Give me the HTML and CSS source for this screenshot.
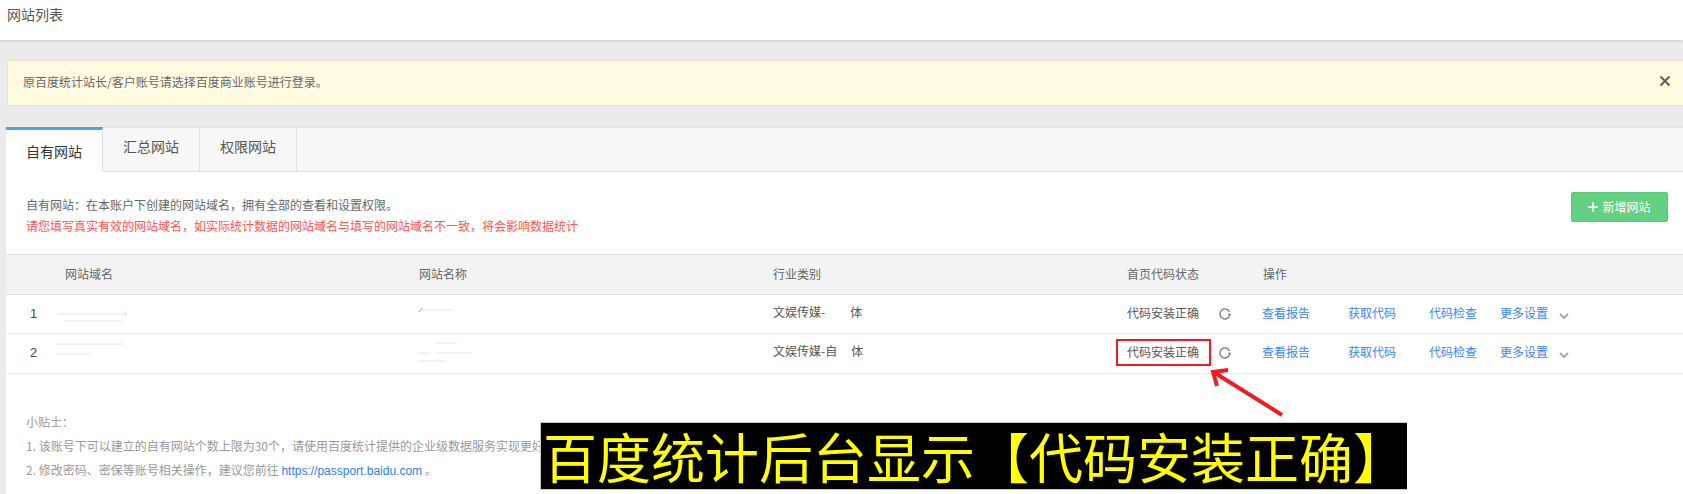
FILE: index.html
```html
<!DOCTYPE html>
<html lang="zh-CN">
<head>
<meta charset="utf-8">
<title>网站列表</title>
<link rel="stylesheet" href="styles.css">
</head>
<body>
<header class="topbar">网站列表</header>
<div class="alert">
  <span>原百度统计站长/客户账号请选择百度商业账号进行登录。</span>
  <svg class="alert-close" viewBox="0 0 12 12" width="12" height="12"><path d="M1.5 1.5l9 9M10.5 1.5l-9 9"/></svg>
</div>
<main class="panel">
  <nav class="tabs">
    <a class="tab tab-active">自有网站</a>
    <a class="tab">汇总网站</a>
    <a class="tab">权限网站</a>
  </nav>
  <section class="intro">
    <div class="intro-text">
      <p>自有网站：在本账户下创建的网站域名，拥有全部的查看和设置权限。</p>
      <p class="warn">请您填写真实有效的网站域名，如实际统计数据的网站域名与填写的网站域名不一致，将会影响数据统计</p>
    </div>
    <button class="add-btn"><svg class="plus" viewBox="0 0 10 10" width="10" height="10"><path d="M5 0v10M0 5h10"/></svg>新增网站</button>
  </section>
  <div class="row row-head">
    <div class="num"></div>
    <div>网站域名</div>
    <div>网站名称</div>
    <div>行业类别</div>
    <div>首页代码状态</div>
    <div>操作</div>
  </div>
  <div class="row row-one">
    <div class="num">1</div>
    <div><svg class="smudge" width="100" height="39"><path d="M-7 19H61M0 26H57"/><path class="tick" d="M60.500 16v6"/></svg></div>
    <div><svg class="smudge" width="100" height="39"><path d="M2 15H34"/><path class="dark" d="M0 17l3-4"/></svg></div>
    <div class="industry">文娱传媒-<span class="gap"></span>体</div>
    <div class="status">代码安装正确<svg class="refresh" viewBox="0 0 12 12" width="12" height="12"><path d="M10.800 7.200a5 5 0 1 1-.3-3.300"/><path class="refresh-head" d="M8.800 5.800h3.200l-1.500 2.200z"/></svg></div>
    <div class="ops"><a>查看报告</a><a>获取代码</a><a>代码检查</a><a>更多设置</a><svg class="chev" viewBox="0 0 10 6" width="10" height="6"><path d="M1 1l4 4 4-4"/></svg></div>
  </div>
  <div class="row row-two">
    <div class="num">2</div>
    <div><svg class="smudge" width="100" height="39"><path d="M-9 10H59M-8 20H26"/></svg></div>
    <div><svg class="smudge" width="100" height="39"><path d="M16 9H38M0 19H11M18 19H52M0 27H26"/></svg></div>
    <div class="industry">文娱传媒-自<span class="gap gap-short"></span>体</div>
    <div class="status">代码安装正确<svg class="refresh" viewBox="0 0 12 12" width="12" height="12"><path d="M10.800 7.200a5 5 0 1 1-.3-3.300"/><path class="refresh-head" d="M8.800 5.800h3.200l-1.500 2.200z"/></svg></div>
    <div class="ops"><a>查看报告</a><a>获取代码</a><a>代码检查</a><a>更多设置</a><svg class="chev" viewBox="0 0 10 6" width="10" height="6"><path d="M1 1l4 4 4-4"/></svg></div>
  </div>
  <section class="tips">
    <p>小贴士：</p>
    <p>1. 该账号下可以建立的自有网站个数上限为30个，请使用百度统计提供的企业级数据服务实现更好</p>
    <p>2. 修改密码、密保等账号相关操作，建议您前往 <a class="tip-link">https://passport.baidu.com</a> 。</p>
  </section>
</main>
<div class="mark-box"></div>
<svg class="mark-arrow" viewBox="0 0 80 54" width="80" height="54"><path class="shaft" d="M75 49L8 7"/><path class="head" d="M21 4L6 6 10 20"/></svg>
<div class="banner">百度统计后台显示【代码安装正确】</div>
</body>
</html>
```
FILE: styles.css
```css
* { box-sizing: border-box; }
html, body { margin: 0; padding: 0; height: 494px; overflow: hidden; }
body {
  position: relative;
  background: #ebebeb;
  font-family: "Noto Sans CJK SC", "Liberation Sans", sans-serif;
  font-size: 12px;
  color: #555;
}
p { margin: 0; }

.topbar {
  height: 40px;
  padding: 4px 7px 0;
  background: #fff;
  font-size: 14px;
  line-height: 20px;
  color: #555;
  box-shadow: 0 1px 3px rgba(0, 0, 0, .14);
}

.alert {
  display: flex;
  align-items: center;
  justify-content: space-between;
  height: 46px;
  margin: 20px 0 21px 7px;
  padding: 0 12px 0 15px;
  background: #fffbe1;
  border: 1px solid #ebe5c8;
  border-right: 0;
  border-radius: 2px 0 0 2px;
  color: #666;
}
.alert > span { padding-bottom: 3px; }
.alert-close { fill: none; stroke: #5f5f5f; stroke-width: 2; margin-top: -4px; }

.panel {
  height: 367px;
  margin-left: 6px;
  background: #fff;
}

.tabs {
  display: flex;
  height: 45px;
  background: #f7f7f7;
  border-top: 1px solid #e4e4e4;
  border-bottom: 1px solid #e1e1e1;
}
.tab {
  width: 97px;
  height: 44px;
  padding-top: 8px;
  font-size: 14px;
  line-height: 20px;
  text-align: center;
  color: #555;
  border-right: 1px solid #e1e1e1;
}
.tab-active {
  height: 45px;
  margin-top: -1px;
  padding-top: 11px;
  background: #fff;
  color: #333;
  border-top: 3px solid #4aa3f5;
}

.intro {
  display: flex;
  justify-content: space-between;
  align-items: flex-start;
  height: 82px;
  padding: 20px 15px 0 20px;
}
.intro-text { padding-top: 2px; line-height: 21px; color: #666; }
.warn { color: #f55; }
.add-btn {
  display: flex;
  align-items: center;
  justify-content: center;
  gap: 4px;
  width: 97px;
  height: 30px;
  padding: 0 0 2px;
  background: #62d282;
  border: 1px solid #53cb75;
  border-radius: 2px;
  color: #fff;
  font: inherit;
}
.plus { stroke: #fff; stroke-width: 1.600; fill: none; margin-top: 2px; }

.row {
  display: grid;
  grid-template-columns: 59px 354px 354px 354px 136px 1fr;
  align-items: center;
  height: 39px;
  color: #555;
  border-bottom: 1px solid #ececec;
}
.row-head {
  height: 41px;
  padding-bottom: 3px;
  background: #f3f3f3;
  border-top: 1px solid #e1e1e1;
  border-bottom: 1px solid #e1e1e1;
  color: #666;
}
.row-two { height: 40px; }
.num { padding: 0 0 2px 24px; font-family: "Liberation Sans", sans-serif; font-size: 13px; color: #445; }

.smudge { display: block; overflow: visible; fill: none; stroke: #e6e6e6; stroke-width: 1; }
.smudge .tick { stroke: #b8f2f5; stroke-width: 1; }
.smudge .dark { stroke: #999; }

.industry { display: flex; align-items: center; height: 100%; padding-bottom: 6px; color: #555; }
.gap { display: inline-block; width: 25px; }
.gap-short { width: 14px; }

.status { display: flex; align-items: center; height: 100%; padding-bottom: 4px; color: #555; }
.refresh { margin-left: 20px; margin-top: 3px; fill: none; stroke: #777; stroke-width: 1.300; }
.refresh .refresh-head { fill: #667; stroke: none; }

.ops { display: flex; align-items: center; height: 100%; padding-bottom: 4px; margin-left: -1px; color: #3a85f0; }
.ops a:nth-child(1) { margin-right: 38px; }
.ops a:nth-child(2) { margin-right: 33px; }
.ops a:nth-child(3) { margin-right: 23px; }
.chev { margin-left: 11px; margin-top: 6px; fill: none; stroke: #aaa; stroke-width: 2; }

.tips {
  padding: 36px 0 0 20px;
  line-height: 24px;
  color: #999;
  white-space: nowrap;
}
.tip-link { color: #2f80ed; font-family: "Liberation Sans", sans-serif; }

/* Annotations drawn over the screenshot */
.mark-box {
  position: absolute;
  left: 1116px;
  top: 339px;
  width: 95px;
  height: 27px;
  border: 2px solid #ee1c25;
}
.mark-arrow {
  position: absolute;
  left: 1207px;
  top: 366px;
  fill: none;
  stroke: #ee1c25;
}
.mark-arrow .shaft { stroke-width: 4; }
.mark-arrow .head { stroke-width: 4; }
.banner {
  position: absolute;
  left: 540px;
  top: 422px;
  width: 867px;
  height: 68px;
  padding-left: 2px;
  background: #000;
  border: 1px solid #ccc;
  border-right: 0;
  color: #ff0;
  font-size: 54px;
  line-height: 66px;
  white-space: nowrap;
}
```
